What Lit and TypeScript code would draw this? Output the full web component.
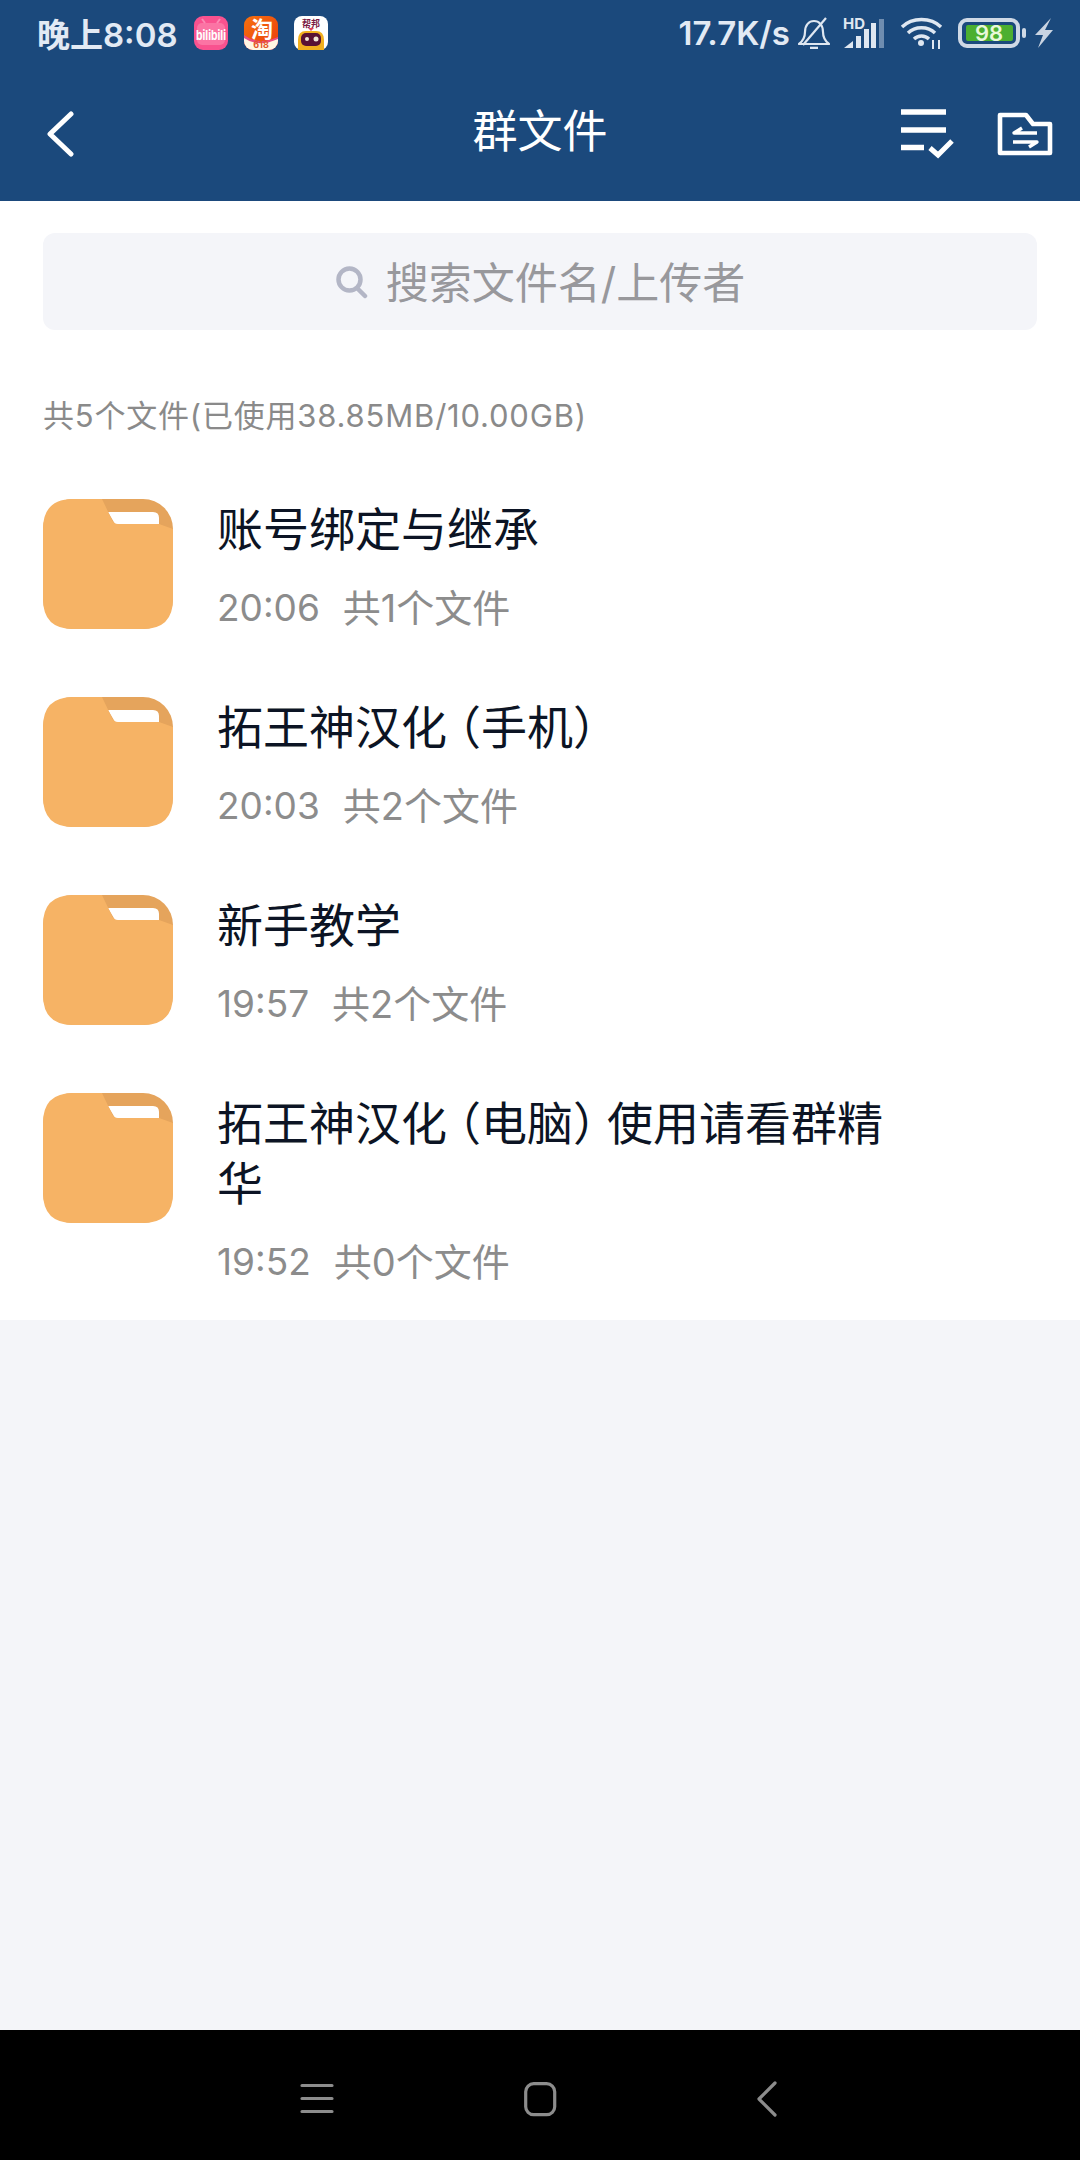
import { LitElement, html, css, svg } from 'lit';
import { customElement } from 'lit/decorators.js';

const paren = (open: boolean) =>
  open ? html`<span class="po">（</span>` : html`<span class="pc">）</span>`;

const files = [
  { title: html`账号绑定与继承`, time: '20:06', count: '共1个文件' },
  { title: html`拓王神汉化${paren(true)}手机${paren(false)}`, time: '20:03', count: '共2个文件' },
  { title: html`新手教学`, time: '19:57', count: '共2个文件' },
  {
    title: html`拓王神汉化${paren(true)}电脑${paren(false)}使用请看群精华`,
    time: '19:52',
    count: '共0个文件',
  },
];

const folderIcon = svg`
  <svg class="folder" width="130" height="130" viewBox="0 0 130 130">
    <rect width="130" height="130" rx="30" fill="#e5a45c" />
    <path d="M65 13 H110 Q116 13 116 19 V25 H72 Z" fill="#fff" />
    <path d="M30 0 H59 L69 21 Q71 25 75 25 H116 L130 30 V100 Q130 130 100 130 H30 Q0 130 0 100 V30 Q0 0 30 0 Z" fill="#f6b365" />
  </svg>`;

@customElement('app-root')
export class AppRoot extends LitElement {
  static styles = css`
    :host {
      display: block;
      width: 1080px;
      height: 2160px;
      font-family: 'Inter', 'Noto Sans CJK SC', sans-serif;
    }

    .page {
      display: flex;
      flex-direction: column;
      height: 2160px;
      background: #f4f5f9;
    }

    .top {
      background: #1b497c;
      height: 201px;
      flex: none;
    }

    .status {
      display: flex;
      align-items: center;
      height: 66px;
      padding: 0 26px 0 37px;
      color: #e2eaf4;
    }

    .clock {
      font-size: 33px;
      font-weight: 600;
      width: 157px;
      white-space: nowrap;
    }

    .apps {
      display: flex;
      gap: 16px;
    }

    .right {
      margin-left: auto;
      display: flex;
      align-items: center;
    }

    .speed {
      font-size: 33px;
      font-weight: 600;
      margin-right: 8px;
      white-space: nowrap;
    }

    .signal {
      margin-left: 13px;
      overflow: visible;
    }

    .wifi {
      margin-left: 16px;
    }

    .battery {
      margin-left: 15px;
    }

    .bolt {
      margin-left: 6px;
    }

    .bar {
      display: flex;
      align-items: center;
      justify-content: space-between;
      height: 135px;
      position: relative;
      padding: 0 27px 0 46px;
    }

    .bar h1 {
      position: absolute;
      left: 0;
      right: 0;
      top: 33px;
      margin: 0;
      font-size: 45px;
      line-height: 66px;
      font-weight: 400;
      color: #fff;
      text-align: center;
    }

    .actions {
      display: flex;
      align-items: center;
      gap: 42px;
    }

    .list {
      background: #fff;
      padding: 32px 43px 36px;
    }

    .search {
      display: flex;
      align-items: center;
      justify-content: center;
      gap: 18px;
      height: 97px;
      border-radius: 12px;
      background: #f4f5f9;
      color: #98989c;
      font-size: 43px;
    }

    .search span {
      margin-top: -4px;
    }

    .summary {
      margin: 66px 0 63px;
      height: 40px;
      line-height: 40px;
      font-size: 31px;
      letter-spacing: 0.8px;
      color: #8a8a8a;
      white-space: nowrap;
    }

    .item {
      display: flex;
      gap: 44px;
      margin-bottom: 67px;
    }

    .item:last-child {
      margin-bottom: 0;
    }

    .folder {
      flex: none;
    }

    .text {
      flex: 1;
      min-width: 0;
    }

    .title {
      max-width: 680px;
      font-size: 46px;
      line-height: 60px;
      color: #0c1424;
    }

    /* half width parens, the reference font sets them tighter than Noto */
    .po {
      font-feature-settings: 'halt';
      padding-left: 11px;
    }

    .pc {
      font-feature-settings: 'halt';
      padding-right: 11px;
    }

    .meta {
      margin-top: 27px;
      display: flex;
      gap: 23px;
      font-size: 37px;
      line-height: 44px;
      color: #8c8c8c;
    }

    .count {
      font-size: 38px;
    }

    .rest {
      flex: 1;
    }

    .nav {
      flex: none;
      height: 130px;
      background: #000;
      position: relative;
    }

    .nav svg {
      display: block;
    }
  `;

  renderStatus() {
    return html`
      <div class="status">
        <span class="clock">晚上8:08</span>
        <div class="apps">
          <svg width="34" height="34" viewBox="0 0 34 34">
            <rect width="34" height="34" rx="9" fill="#f9528f" />
            <rect x="3" y="7" width="28" height="22" rx="5" fill="#fb74a4" />
            <path d="M11 7 L8 3 M23 7 L26 3" stroke="#fb8ab4" stroke-width="2" />
            <text x="17" y="24" font-size="13" font-weight="700" fill="#fff" text-anchor="middle" textLength="30" lengthAdjust="spacingAndGlyphs">bilibili</text>
          </svg>
          <svg width="34" height="34" viewBox="0 0 34 34">
            <defs>
              <linearGradient id="tb" x1="0" y1="0" x2="1" y2="1">
                <stop offset="0" stop-color="#f7710f" />
                <stop offset="1" stop-color="#e93b0b" />
              </linearGradient>
              <clipPath id="tc"><rect width="34" height="34" rx="9" /></clipPath>
            </defs>
            <g clip-path="url(#tc)">
              <rect width="34" height="34" fill="url(#tb)" />
              <path d="M0 19 Q14 30 34 21 V34 H0 Z" fill="#e94c84" />
              <path d="M0 22 Q14 32 34 23 V34 H0 Z" fill="#fff6e4" />
            </g>
            <text x="18" y="21" font-size="22" font-weight="700" fill="#fff" text-anchor="middle">淘</text>
            <text x="17" y="32" font-size="9" font-weight="700" fill="#e4572a" text-anchor="middle">618</text>
          </svg>
          <svg width="34" height="34" viewBox="0 0 34 34">
            <rect width="34" height="34" rx="8" fill="#fff" />
            <text x="17" y="11" font-size="9" font-weight="700" fill="#7a1b44" text-anchor="middle">帮邦</text>
            <path d="M4 24 Q4 15 12 15 H22 Q30 15 30 24 V34 H4 Z" fill="#f2b01e" />
            <rect x="7" y="17" width="20" height="13" rx="5" fill="#5a1234" />
            <circle cx="13" cy="23" r="2" fill="#f3e8d8" />
            <circle cx="22" cy="23" r="2.5" fill="#f3e8d8" />
            <path d="M14 12 L20 12 L17 15 Z" fill="#e0405a" />
          </svg>
        </div>
        <div class="right">
          <span class="speed">17.7K/s</span>
          <svg width="32" height="32" viewBox="0 0 32 32" fill="none" stroke="#dfe7f1" stroke-width="2.2">
            <path d="M1 27 C5 24 7 21 7 15 C7 8 11 4 16 4 C21 4 25 8 25 15 C25 21 27 24 31 27 Z" stroke-linejoin="round" />
            <path d="M12 31 H20" stroke-width="2.6" />
            <path d="M5 28 L28 1" />
          </svg>
          <svg class="signal" width="41" height="30" viewBox="0 0 41 30">
            <text x="0" y="11" font-size="15" font-weight="700" fill="#dfe7f1">HD</text>
            <path d="M1 30 L10 23 V30 Z" fill="#dfe7f1" />
            <rect x="13" y="18" width="5" height="12" fill="#dfe7f1" />
            <rect x="21" y="11" width="5" height="19" fill="#dfe7f1" />
            <rect x="28" y="5" width="5" height="25" fill="#dfe7f1" />
            <rect x="36" y="1" width="5" height="29" fill="#6f8db0" />
          </svg>
          <svg class="wifi" width="43" height="32" viewBox="0 0 43 32" fill="none" stroke="#dfe7f1" stroke-width="3.4">
            <path d="M2 10 C12 0 31 0 41 10" />
            <path d="M8 16 C15 9 28 9 35 16" />
            <path d="M14 22 C18 18 25 18 29 22" />
            <circle cx="21" cy="26" r="3" fill="#dfe7f1" stroke="none" />
            <path d="M33 23 V32 M39 23 V32" stroke-width="2" />
          </svg>
          <svg class="battery" width="70" height="30" viewBox="0 0 70 30">
            <rect x="2" y="2" width="58" height="26" rx="7" fill="none" stroke="#cfd9e6" stroke-width="4" />
            <rect x="8" y="7" width="47" height="16" rx="2" fill="#4caf30" />
            <rect x="64" y="10" width="4" height="10" rx="2" fill="#cfd9e6" />
            <text x="31" y="23" font-size="22" font-weight="600" fill="#e8f8da" text-anchor="middle">98</text>
          </svg>
          <svg class="bolt" width="20" height="30" viewBox="0 0 20 30">
            <path d="M17 0 L1 17 H9 L4 30 L19 12 H11 Z" fill="#c9d4e2" />
          </svg>
        </div>
      </div>
    `;
  }

  renderBar() {
    return html`
      <div class="bar">
        <h1>群文件</h1>
        <svg width="28" height="46" viewBox="0 0 28 46" fill="none" stroke="#fff" stroke-width="5" stroke-linecap="round" stroke-linejoin="round">
          <path d="M25 3 L4 23 L25 43" />
        </svg>
        <div class="actions">
          <svg width="55" height="50" viewBox="0 0 55 50" fill="none" stroke="#fff" stroke-width="5.5">
            <path d="M1 3 H46 M1 21 H46 M1 38.5 H24" />
            <path d="M30 39 L38 46 L52 32" stroke-width="5" />
          </svg>
          <svg width="56" height="44" viewBox="0 0 56 44" fill="none" stroke="#fff" stroke-width="4.6" stroke-linejoin="round">
            <path d="M3 3 H29 L36 12 H53 V41 H3 Z" />
            <path d="M40 21 H17 L25 16 M16 30 H40 L32 35" stroke-width="3.4" />
          </svg>
        </div>
      </div>
    `;
  }

  render() {
    return html`
      <div class="page">
        <div class="top">${this.renderStatus()}${this.renderBar()}</div>
        <div class="list">
          <div class="search">
            <svg width="33" height="34" viewBox="0 0 33 34" fill="none" stroke="#b3b6c6" stroke-width="4.5">
              <circle cx="14.5" cy="14.5" r="11" />
              <path d="M23 24 L30 31" stroke-linecap="round" />
            </svg>
            <span>搜索文件名/上传者</span>
          </div>
          <div class="summary">共5个文件(已使用38.85MB/10.00GB)</div>
          ${files.map(
            (f) => html`
              <div class="item">
                ${folderIcon}
                <div class="text">
                  <div class="title">${f.title}</div>
                  <div class="meta"><span>${f.time}</span><span class="count">${f.count}</span></div>
                </div>
              </div>
            `
          )}
        </div>
        <div class="rest"></div>
        <div class="nav">
          <svg width="1080" height="130" viewBox="0 0 1080 130" fill="none" stroke="#8c8c8c" stroke-width="3.2">
            <path d="M302 55.5 H332 M302 68.5 H332 M302 81.5 H332" stroke-linecap="round" />
            <rect x="525.7" y="53.7" width="29" height="31" rx="8" />
            <path d="M775 53 L759 69 L775 85" stroke-linecap="round" stroke-linejoin="round" />
          </svg>
        </div>
      </div>
    `;
  }
}
